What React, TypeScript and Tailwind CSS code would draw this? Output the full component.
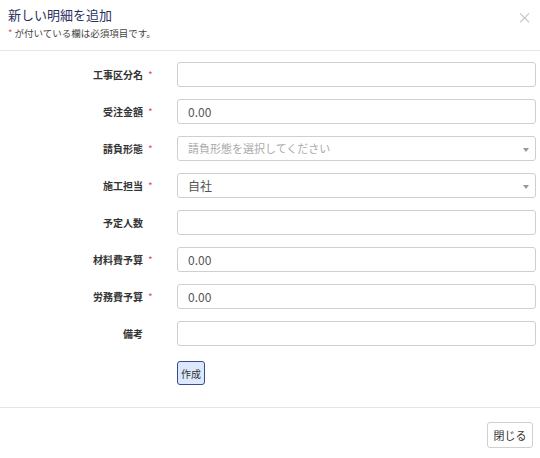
import React from "react";

const font = { fontFamily: '"Noto Sans CJK JP", "Noto Sans", sans-serif' };

type Row = { label: string; req: boolean; kind: "input" | "select"; value?: string; placeholder?: string };

const rows: Row[] = [
  { label: "工事区分名", req: true, kind: "input" },
  { label: "受注金額", req: true, kind: "input", value: "0.00" },
  { label: "請負形態", req: true, kind: "select", placeholder: "請負形態を選択してください" },
  { label: "施工担当", req: true, kind: "select", value: "自社" },
  { label: "予定人数", req: false, kind: "input" },
  { label: "材料費予算", req: true, kind: "input", value: "0.00" },
  { label: "労務費予算", req: true, kind: "input", value: "0.00" },
  { label: "備考", req: false, kind: "input" },
];

function Field({ r }: { r: Row }) {
  return (
    <div className="flex items-center h-[25px]">
      <div className="w-[177px] shrink-0 flex justify-end items-center pr-[10px]">
        <span className="text-[10px] font-bold text-[#333]">{r.label}</span>
        <span className="w-[24px] pl-[5px] text-[10px] text-[#e05656] leading-none">{r.req ? "*" : ""}</span>
      </div>
      <div className="flex-1 h-[25px] border border-[#cfcfcf] rounded-[3px] bg-white flex items-center px-[10px] relative">
        {r.value ? (
          <span className="text-[12px] text-[#555]">{r.value}</span>
        ) : r.placeholder ? (
          <span className="text-[11px] text-[#aaa]">{r.placeholder}</span>
        ) : null}
        {r.kind === "select" && (
          <span className="absolute right-[6px] top-[11px] w-0 h-0 border-l-[3px] border-r-[3px] border-t-[4px] border-l-transparent border-r-transparent border-t-[#999]" />
        )}
      </div>
    </div>
  );
}

export default function App() {
  return (
    <div className="w-[540px] h-[458px] bg-white flex flex-col" style={font}>
      <div className="h-[51px] border-b border-[#e5e5e5] px-[8px] pt-[6px] flex justify-between">
        <div className="flex flex-col">
          <span className="text-[13px] leading-[18px] text-[#2a3160]">新しい明細を追加</span>
          <span className="text-[9.5px] leading-[14px] text-[#444] mt-[2px]">
            <span className="text-[#e05656]">*</span> が付いている欄は必須項目です。
          </span>
        </div>
        <span className="text-[15px] leading-none text-[#c4c4c4] mt-[3px]">×</span>
      </div>
      <div className="flex-1 pt-[11px] pr-[4px] flex flex-col gap-[12px]">
        {rows.map((r) => (
          <Field key={r.label} r={r} />
        ))}
        <div className="pl-[177px] pt-[3px]">
          <button className="h-[24px] w-[28px] rounded-[3px] border border-[#3a4a8a] bg-[#dce8fc] text-[10px] text-[#333] flex items-center justify-center">
            作成
          </button>
        </div>
      </div>
      <div className="h-[51px] border-t border-[#e5e5e5] flex justify-end items-start pt-[14px] pr-[7px]">
        <button className="h-[26px] w-[46px] rounded-[3px] border border-[#d0d0d0] bg-white text-[11px] text-[#333] flex items-center justify-center">
          閉じる
        </button>
      </div>
    </div>
  );
}
